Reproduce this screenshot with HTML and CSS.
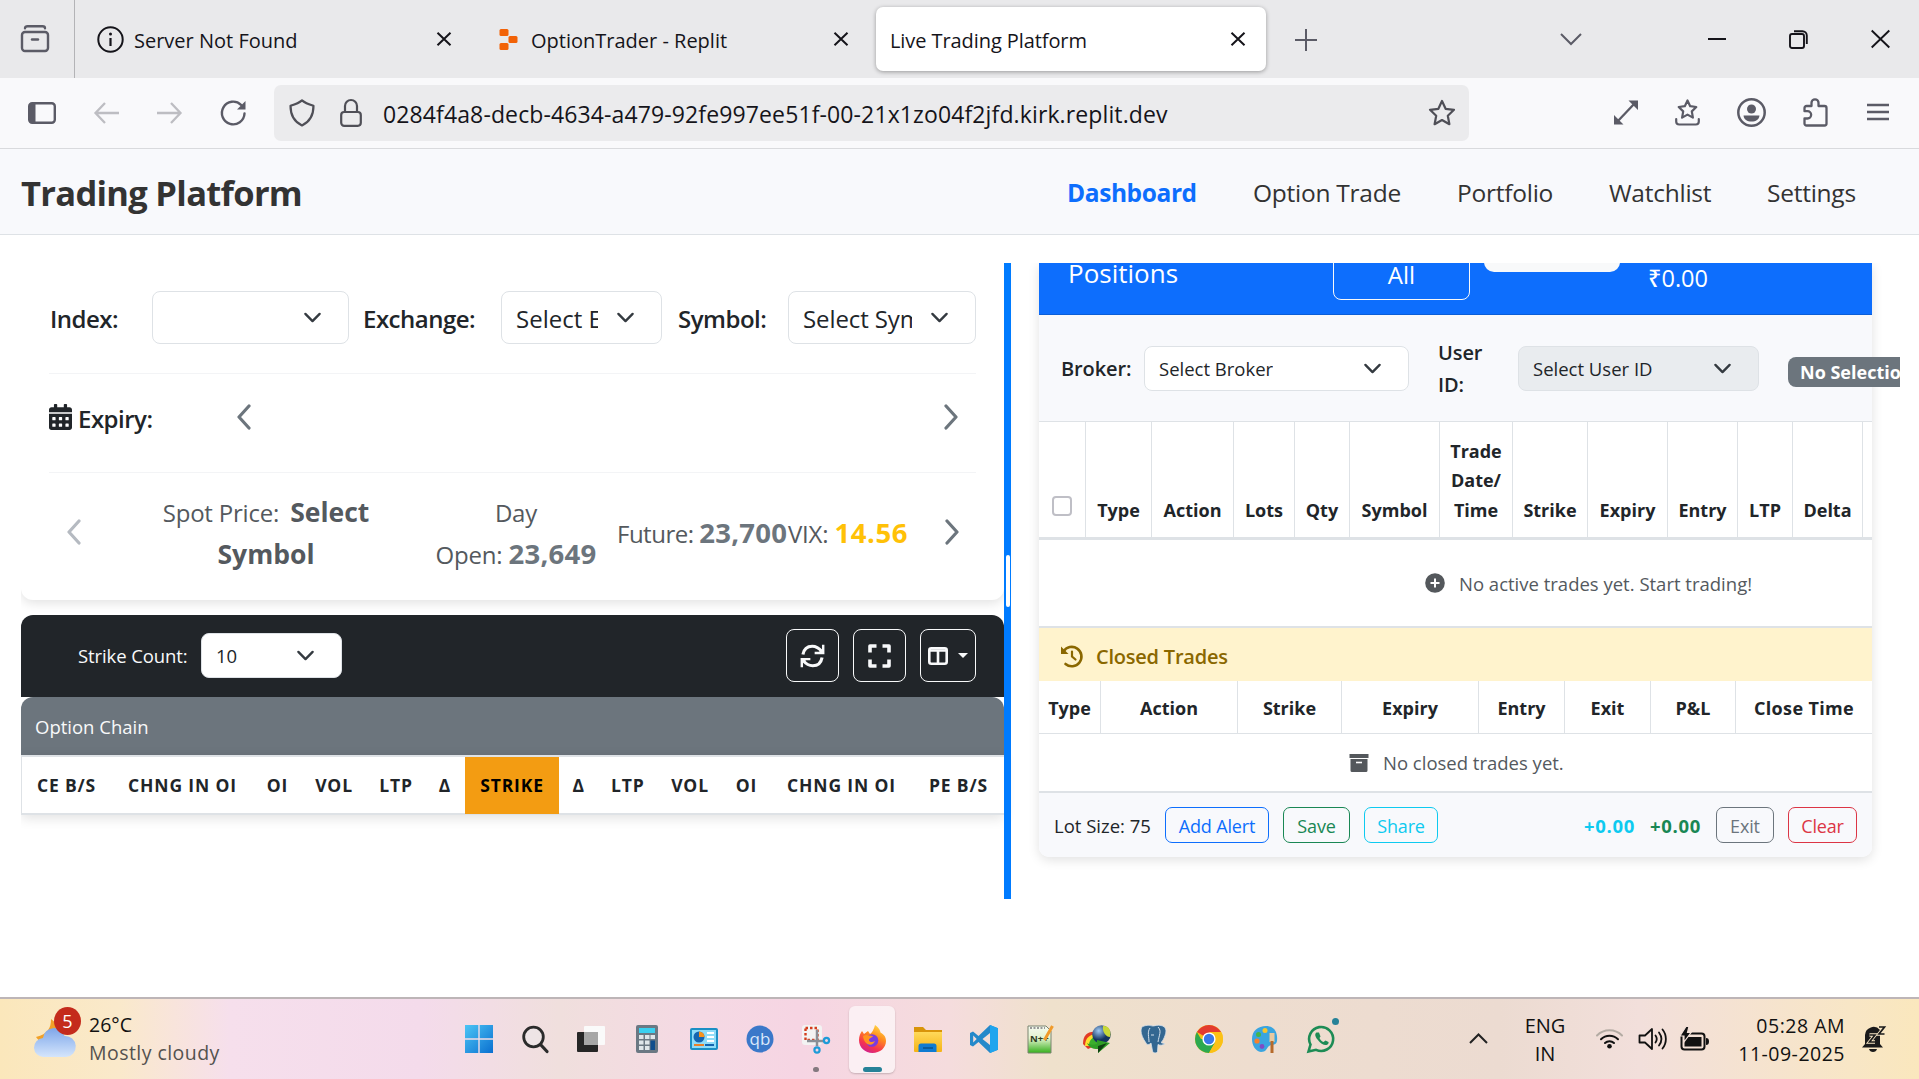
FILE: index.html
```html
<!DOCTYPE html>
<html lang="en">
<head>
<meta charset="utf-8">
<title>Live Trading Platform</title>
<link rel="stylesheet" href="styles.css">
</head>
<body>
<svg class="defs" width="0" height="0">
  <defs>
    <symbol id="chev" viewBox="0 0 16 16"><path d="m2 5 6 6 6-6" fill="none" stroke="#343a40" stroke-width="2" stroke-linecap="round" stroke-linejoin="round"/></symbol>
    <symbol id="left" viewBox="0 0 15 26"><path d="M13 2 3 13l10 11" fill="none" stroke="currentColor" stroke-width="3.2" stroke-linecap="round" stroke-linejoin="round"/></symbol>
    <symbol id="right" viewBox="0 0 15 26"><path d="m2 2 10 11L2 24" fill="none" stroke="currentColor" stroke-width="3.2" stroke-linecap="round" stroke-linejoin="round"/></symbol>
    <symbol id="x" viewBox="0 0 16 14"><path d="M1.5.8 14.5 13.2M14.5.8 1.5 13.2" fill="none" stroke="#15141a" stroke-width="2"/></symbol>
    <linearGradient id="gwin" x1="0" y1="0" x2="1" y2="1"><stop offset="0" stop-color="#4cc5f5"/><stop offset="1" stop-color="#0a6fd0"/></linearGradient>
    <linearGradient id="gcloud" x1="0" y1="0" x2="0" y2="1"><stop offset="0" stop-color="#7fa6e8"/><stop offset=".5" stop-color="#a9c6f3"/><stop offset="1" stop-color="#d5e5fb"/></linearGradient>
    <linearGradient id="gfold" x1="0" y1="0" x2="0" y2="1"><stop offset="0" stop-color="#ffd95a"/><stop offset="1" stop-color="#f5b315"/></linearGradient>
    <linearGradient id="gfox" x1=".8" y1="0" x2=".3" y2="1"><stop offset="0" stop-color="#ffe14a"/><stop offset=".4" stop-color="#ff8a1e"/><stop offset=".75" stop-color="#f5344f"/><stop offset="1" stop-color="#d0208f"/></linearGradient>
    <linearGradient id="gnote" x1="0" y1="0" x2="0" y2="1"><stop offset="0" stop-color="#f6faf0"/><stop offset=".45" stop-color="#e4f3cf"/><stop offset="1" stop-color="#35b01c"/></linearGradient>
    <radialGradient id="gball" cx=".35" cy=".3"><stop offset="0" stop-color="#9ec9f5"/><stop offset="1" stop-color="#14335f"/></radialGradient>
  </defs>
</svg>

<header class="tabs">
  <div class="view"><svg width="30" height="28" viewBox="0 0 30 28"><g fill="none" stroke="#5b5b66" stroke-width="2.4" stroke-linecap="round"><path d="M5 3.2C5 1.8 6 1.2 7.500 1.200h15C24 1.200 25 1.800 25 3.200"/><rect x="2" y="7" width="26" height="19" rx="3"/><path d="M12 14.500h6"/></g></svg></div>
  <div class="tab t1">
    <svg class="fav" width="27" height="27" viewBox="0 0 27 27"><circle cx="13.500" cy="13.500" r="12.200" fill="none" stroke="#15141a" stroke-width="2"/><path d="M13.500 12v8" stroke="#15141a" stroke-width="2.200"/><circle cx="13.500" cy="8" r="1.500" fill="#15141a"/></svg>
    <span>Server Not Found</span><svg class="cx"><use href="#x"/></svg>
  </div>
  <div class="tab t2">
    <svg class="fav" width="19" height="21" viewBox="0 0 19 21"><g fill="#f26207"><rect x=".5" y="0" width="9" height="7" rx="1.500"/><rect x="9.500" y="7" width="9" height="7" rx="1.500"/><rect x=".5" y="14" width="9" height="7" rx="1.500"/></g></svg>
    <span>OptionTrader - Replit</span><svg class="cx"><use href="#x"/></svg>
  </div>
  <div class="tab t3"><span>Live Trading Platform</span><svg class="cx"><use href="#x"/></svg></div>
  <svg class="plus" width="22" height="22" viewBox="0 0 22 22"><path d="M11 0v22M0 11h22" stroke="#5b5b66" stroke-width="2"/></svg>
  <div class="win">
    <svg width="22" height="12" viewBox="0 0 22 12"><path d="m1 1 10 10L21 1" fill="none" stroke="#5b5b66" stroke-width="2"/></svg>
    <svg width="18" height="2"><path d="M0 1h18" stroke="#15141a" stroke-width="2"/></svg>
    <svg width="19" height="19" viewBox="0 0 19 19"><g fill="none" stroke="#15141a" stroke-width="1.900"><rect x="1" y="4" width="14" height="14" rx="2"/><path d="M5 1.200h8.500a4.300 4.300 0 0 1 4.300 4.300V14"/></g></svg>
    <svg width="19" height="18" viewBox="0 0 19 18"><path d="m.7.5 17.600 17M18.300.5.7 17.500" stroke="#15141a" stroke-width="1.900"/></svg>
  </div>
</header>

<div class="toolbar">
  <div class="navbtns">
    <svg width="28" height="22" viewBox="0 0 28 22"><rect x="1.200" y="1.200" width="25.600" height="19.600" rx="3" fill="none" stroke="#5b5b66" stroke-width="2.400"/><path d="M2 2h5.500v18H2z" fill="#5b5b66"/></svg>
    <svg width="25" height="22" viewBox="0 0 25 22"><path d="M11 1 1.500 11 11 21M1.500 11H25" fill="none" stroke="#bdbdc2" stroke-width="2.300"/></svg>
    <svg width="25" height="22" viewBox="0 0 25 22"><path d="m14 1 9.500 10L14 21M23.500 11H0" fill="none" stroke="#bdbdc2" stroke-width="2.300"/></svg>
    <svg width="27" height="26" viewBox="0 0 27 26"><path d="M24.500 13.500a11.300 11.300 0 1 1-3.500-8.700" fill="none" stroke="#5b5b66" stroke-width="2.400" stroke-linecap="round"/><path d="M25.500 1v8.500H17z" fill="#5b5b66"/></svg>
  </div>
  <div class="url">
    <svg width="26" height="28" viewBox="0 0 26 28"><path d="M13 1.400C10 4 6 5.400 1.500 6.800c0 9 3 15.700 11.500 19.700 8.500-4 11.500-10.700 11.500-19.700C20 5.400 16 4 13 1.400z" fill="none" stroke="#4f4f57" stroke-width="2.200" stroke-linejoin="round"/></svg>
    <svg width="22" height="28" viewBox="0 0 22 28"><g fill="none" stroke="#4f4f57" stroke-width="2.200"><rect x="1.200" y="13" width="19.600" height="13.800" rx="3"/><path d="M5 13V7a6 6 0 0 1 12 0v6"/></g></svg>
    <span>0284f4a8-decb-4634-a479-92fe997ee51f-00-21x1zo04f2jfd.kirk.replit.dev</span>
    <svg class="star" width="28" height="28" viewBox="0 0 28 28"><path d="m14 2 3.600 7.800 8.400 1-6.200 5.900 1.600 8.500L14 21l-7.400 4.200 1.600-8.500L2 10.800l8.400-1z" fill="none" stroke="#4f4f57" stroke-width="2.200" stroke-linejoin="round"/></svg>
  </div>
  <div class="ext">
    <svg width="24" height="25" viewBox="0 0 24 25"><path d="M3 22 21 3" stroke="#5b5b66" stroke-width="2.300"/><path d="M14.500.5H24V10zM0 15v9.500h9.500z" fill="#5b5b66"/></svg>
    <svg width="25" height="27" viewBox="0 0 25 27"><g fill="none" stroke="#5b5b66" stroke-width="2.200" stroke-linejoin="round" stroke-linecap="round"><path d="m12.500 1.500 2.700 5.700 6.100.8-4.500 4.400 1.100 6.200-5.400-3-5.400 3 1.100-6.200L3.700 8l6.100-.8z"/><path d="M1.200 20v2.500a3 3 0 0 0 3 3h16.600a3 3 0 0 0 3-3V20"/></g></svg>
    <svg width="29" height="29" viewBox="0 0 29 29"><circle cx="14.500" cy="14.500" r="13.200" fill="none" stroke="#5b5b66" stroke-width="2.500"/><circle cx="14.500" cy="11" r="4.500" fill="#5b5b66"/><path d="M6.500 17.500h16c-.5 4-3.500 6-8 6s-7.500-2-8-6z" fill="#5b5b66"/></svg>
    <svg width="25" height="29" viewBox="0 0 25 29"><path d="M1.500 26V20.500h3a3.500 3.500 0 0 0 0-7.300h-3V10a2 2 0 0 1 2-2h5V4.800a3.500 3.500 0 0 1 7 0V8h6a2 2 0 0 1 2 2v15.500a2 2 0 0 1-2 2h-18a2 2 0 0 1-2-2" fill="none" stroke="#5b5b66" stroke-width="2.300" stroke-linejoin="round"/></svg>
    <svg width="22" height="18" viewBox="0 0 22 18"><path d="M0 2h22M0 9h22M0 16h22" stroke="#5b5b66" stroke-width="2.300"/></svg>
  </div>
</div>

<nav class="site">
  <div class="brand">Trading Platform</div>
  <div class="links"><b>Dashboard</b><span>Option Trade</span><span>Portfolio</span><span>Watchlist</span><span>Settings</span></div>
</nav>

<main>
  <section class="leftcol">
    <div class="panel">
      <div class="row sel">
        <label>Index:</label><div class="select"><svg><use href="#chev"/></svg></div>
        <label>Exchange:</label><div class="select"><span>Select Exchange</span><svg><use href="#chev"/></svg></div>
        <label>Symbol:</label><div class="select"><span>Select Symbol</span><svg><use href="#chev"/></svg></div>
      </div>
      <div class="row expiry">
        <svg class="cal" width="23" height="26" viewBox="0 0 448 512" preserveAspectRatio="none"><path fill="#212529" d="M0 464c0 26 22 48 48 48h352c26 0 48-22 48-48V192H0v272zm320-196c0-7 5-12 12-12h40c7 0 12 5 12 12v40c0 7-5 12-12 12h-40c-7 0-12-5-12-12v-40zm0 128c0-7 5-12 12-12h40c7 0 12 5 12 12v40c0 7-5 12-12 12h-40c-7 0-12-5-12-12v-40zM192 268c0-7 5-12 12-12h40c7 0 12 5 12 12v40c0 7-5 12-12 12h-40c-7 0-12-5-12-12v-40zm0 128c0-7 5-12 12-12h40c7 0 12 5 12 12v40c0 7-5 12-12 12h-40c-7 0-12-5-12-12v-40zM64 268c0-7 5-12 12-12h40c7 0 12 5 12 12v40c0 7-5 12-12 12H76c-7 0-12-5-12-12v-40zm0 128c0-7 5-12 12-12h40c7 0 12 5 12 12v40c0 7-5 12-12 12H76c-7 0-12-5-12-12v-40zM400 64h-48V16c0-9-7-16-16-16h-32c-9 0-16 7-16 16v48H160V16c0-9-7-16-16-16h-32c-9 0-16 7-16 16v48H48C22 64 0 86 0 112v48h448v-48c0-26-22-48-48-48z"/></svg>
        <label>Expiry:</label>
        <svg class="arrow"><use href="#left"/></svg><svg class="arrow"><use href="#right"/></svg>
      </div>
      <div class="row spot">
        <svg class="arrow dim"><use href="#left"/></svg>
        <div class="q q1">Spot Price: <b>Select<br>Symbol</b></div>
        <div class="q q2">Day<br>Open: <b>23,649</b></div>
        <div class="q q3">Future: <b>23,700</b></div>
        <div class="q q4">VIX: <b>14.56</b></div>
        <svg class="arrow"><use href="#right"/></svg>
      </div>
    </div>
    <div class="strikebar">
      <span>Strike Count:</span>
      <div class="select"><span>10</span><svg><use href="#chev"/></svg></div>
      <div class="btns">
        <i><svg width="25" height="24" viewBox="0 0 512 512" preserveAspectRatio="none"><path fill="none" stroke="#f8f9fa" stroke-width="64" d="M60 225C80 110 150 48 250 48c80 0 140 40 195 110M452 287c-20 115-90 177-190 177-80 0-140-40-195-110"/><path fill="#f8f9fa" d="M500 16v200H300v-50h90l60-60V16zM12 496V296h200v50h-90l-60 60v90z"/></svg></i>
        <i><svg width="23" height="24" viewBox="0 0 23 24"><path d="M2 8.500V2h6.500M14.500 2H21v6.500M21 15.500V22h-6.500M8.500 22H2v-6.500" fill="none" stroke="#f8f9fa" stroke-width="3.600" stroke-linejoin="round"/></svg></i>
        <i class="wide"><svg width="20" height="18" viewBox="0 0 20 18"><rect x="1.300" y="1.300" width="17.400" height="15.400" rx="2" fill="none" stroke="#f8f9fa" stroke-width="2.600"/><path d="M1 3.500h18M10 3v14" stroke="#f8f9fa" stroke-width="2.600"/></svg><em></em></i>
      </div>
    </div>
    <div class="chaintitle">Option Chain</div>
    <div class="chain"><span>CE B/S</span><span>CHNG IN OI</span><span>OI</span><span>VOL</span><span>LTP</span><span>Δ</span><span class="strike">STRIKE</span><span>Δ</span><span>LTP</span><span>VOL</span><span>OI</span><span>CHNG IN OI</span><span>PE B/S</span></div>
  </section>
  <div class="split"><i></i></div>
  <section class="rightcol">
    <div class="card">
      <div class="pos"><span class="pt">Positions</span><span class="all">All</span><span class="act"></span><span class="pnl">₹0.00</span></div>
      <div class="filter">
        <label>Broker:</label><div class="select"><span>Select Broker</span><svg><use href="#chev"/></svg></div>
        <label class="uid">User<br>ID:</label><div class="select off"><span>Select User ID</span><svg><use href="#chev"/></svg></div>
        <b class="badge">No Selection</b>
      </div>
      <div class="thead t-open"><span><i class="check"></i></span><span>Type</span><span>Action</span><span>Lots</span><span>Qty</span><span>Symbol</span><span>Trade<br>Date/<br>Time</span><span>Strike</span><span>Expiry</span><span>Entry</span><span>LTP</span><span>Delta</span><span></span></div>
      <div class="empty e1"><svg width="20" height="20" viewBox="0 0 20 20"><circle cx="10" cy="10" r="9.800" fill="#54585c"/><path d="M10 5.500v9M5.500 10h9" stroke="#fff" stroke-width="2"/></svg><span>No active trades yet. Start trading!</span></div>
      <div class="closed"><svg width="23" height="23" viewBox="0 0 23 23"><path d="M3.500 6.500A9.700 9.700 0 1 1 5.500 19" fill="none" stroke="#8a6700" stroke-width="2.600" stroke-linecap="round"/><path d="M1 1.500V9h7.500z" fill="#8a6700"/><path d="M12 6.500v5l3.500 3" fill="none" stroke="#8a6700" stroke-width="2.200" stroke-linecap="round"/></svg><span>Closed Trades</span></div>
      <div class="thead t-closed"><span>Type</span><span>Action</span><span>Strike</span><span>Expiry</span><span>Entry</span><span>Exit</span><span>P&amp;L</span><span>Close Time</span></div>
      <div class="empty e2"><svg width="20" height="18" viewBox="0 0 20 18"><path d="M.5 0h19v4H.5zM1.500 5h17v11.500a1.500 1.500 0 0 1-1.500 1.500H3a1.500 1.500 0 0 1-1.500-1.500z" fill="#54585c"/><path d="M7 8.500h6" stroke="#fff" stroke-width="1.600"/></svg><span>No closed trades yet.</span></div>
      <div class="foot">
        <span class="lot">Lot Size: 75</span><a class="b1">Add Alert</a><a class="b2">Save</a><a class="b3">Share</a>
        <b class="v1">+0.00</b><b class="v2">+0.00</b><a class="b4">Exit</a><a class="b5">Clear</a>
      </div>
    </div>
  </section>
</main>

<footer class="taskbar">
  <div class="weather">
    <svg width="50" height="50" viewBox="0 0 50 50"><path d="M17 8c0 9-3 15-15 18 5 7 12 8 18 6 7-3 10-9 9-14z" fill="#f2a128"/><path d="M10 46a9.500 9.500 0 0 1-1-19 11 11 0 0 1 21.500-2A10.500 10.500 0 0 1 32 46z" fill="url(#gcloud)"/></svg>
    <b>5</b>
    <div class="wt">26°C<br><span>Mostly cloudy</span></div>
  </div>
  <div class="apps">
    <svg viewBox="0 0 28 28"><g fill="url(#gwin)"><path d="M0 0h13.300v13.300H0zM14.700 0H28v13.300H14.700zM0 14.700h13.300V28H0zM14.700 14.700H28V28H14.700z"/></g></svg>
    <svg viewBox="0 0 28 28"><circle cx="12.500" cy="12" r="9.800" fill="#eceaeb" fill-opacity=".5" stroke="#2b2b2b" stroke-width="2.800"/><path d="m19.500 19.500 6.500 7" stroke="#2b2b2b" stroke-width="3.200" stroke-linecap="round"/></svg>
    <svg viewBox="0 0 28 28"><rect x="0" y="7" width="21" height="20" rx="1" fill="#262626"/><rect x="7" y="1" width="21" height="19" rx="1" fill="#fafafa"/><path d="M7 7h14v13H7z" fill="#a6a6a6"/></svg>
    <svg viewBox="0 0 28 28"><rect x="3" y="0" width="22" height="28" rx="2" fill="#6b7883"/><rect x="6" y="3" width="16" height="5" fill="#3ad0f0"/><g fill="#dfe6ea"><path d="M6 10h4.500v4H6zM12 10h4.500v4H12zM17.500 10H22v4h-4.500zM6 15.500h4.500v4H6zM12 15.500h4.500v4H12zM6 21h4.500v4H6zM12 21h4.500v4H12z"/></g><path d="M17.500 15.500H22V25h-4.500z" fill="#124e8c"/></svg>
    <svg viewBox="0 0 28 28"><rect x="0" y="3" width="28" height="22" rx="2" fill="#1b8fc4"/><rect x="2" y="5" width="24" height="18" fill="#8fdcf8"/><circle cx="9" cy="12" r="5.500" fill="#1565b0"/><path d="M9 12V6.500a5.500 5.500 0 0 1 5.500 5.500z" fill="#f8931d"/><path d="M17 8h7M17 12h7M17 16h7" stroke="#fff" stroke-width="2"/><path d="M4 20h10" stroke="#e8812a" stroke-width="2"/><path d="M15 20h9" stroke="#1565b0" stroke-width="2"/></svg>
    <svg viewBox="0 0 28 28"><circle cx="14" cy="14" r="13.500" fill="#3b78c9"/><text x="14" y="20" text-anchor="middle" font-size="17" fill="#dbe9fb">qb</text></svg>
    <div class="snip"><svg viewBox="0 0 28 28"><rect x="0" y="0" width="20" height="20" rx="3" fill="#f3f3f3"/><rect x="3.500" y="3" width="12" height="12" fill="none" stroke="#d33c1c" stroke-width="2.400" stroke-dasharray="2.500 2"/><path d="M15 5v16M5 16h18" stroke="#8a8f96" stroke-width="2.500"/><g fill="none" stroke="#1d9bd8" stroke-width="2.200"><circle cx="24.500" cy="15.500" r="2.600"/><circle cx="15" cy="25" r="2.600"/></g></svg></div>
    <div class="fox"><svg viewBox="0 0 28 28"><path d="M17 0c4 3 5 5 5.500 7.500C27 10 28 13 28 16c0 7-6 12-13.500 12S1 22.500 1 15c0-4 1.500-7 3-9l2 3 4-3 2 3c2-1 4-5 5-9z" fill="url(#gfox)"/><circle cx="14" cy="15.500" r="6.300" fill="#7a3be0"/><path d="M5 11c4-2 6 0 10 0-1 2-4 2-4 4s3 3 6 1c-2 6-11 5-12-5z" fill="#ff9420"/></svg></div>
    <svg viewBox="0 0 28 28"><path d="M0 2h9l3 3h16v8H0z" fill="#d8940a"/><path d="M0 7h28v19a1 1 0 0 1-1 1H1a1 1 0 0 1-1-1z" fill="url(#gfold)"/><path d="M4.500 27v-6a2.500 2.500 0 0 1 2.500-2.500h13a2.500 2.500 0 0 1 2.500 2.500v6z" fill="#0f7bd2"/><path d="M9 23h10" stroke="#0a5590" stroke-width="1.600"/></svg>
    <svg viewBox="0 0 28 28"><path d="m20 0 8 3.200v21.600L20 28 8.500 17 3 21.500 0 20V8l3-1.500L8.500 11zM20 8l-7.500 6L20 20zM3.200 10.500v7L6.700 14z" fill="#2489ca" fill-rule="evenodd"/><path d="m20 0 8 3.200v21.600L20 28z" fill="#1fa5ee"/></svg>
    <svg viewBox="0 0 28 28"><path d="M2 1h18l5 5v22H2z" fill="url(#gnote)" stroke="#7b8471"/><path d="M4 3h15" stroke="#999" stroke-width="2" stroke-dasharray="2 1.500"/><text x="4" y="17" font-size="9.500" font-weight="bold" fill="#2f3c1f">N++</text><path d="m26.500 1-8 14" stroke="#f09a2a" stroke-width="3"/></svg>
    <svg viewBox="0 0 28 28"><path d="M0 19C0 10 5 6 13 7l3 12-11 5z" fill="#e23b26"/><path d="M2 21C2 12 8 9 14 9v12z" fill="#ffe02e"/><path d="M6 20c0-5 4-9 10-9v9z" fill="#3aae2c"/><circle cx="18.500" cy="9.500" r="9.300" fill="url(#gball)"/><path d="M20 1c6-1 8.500 5 7 11-4 0-8-5-7-11z" fill="#c7d838"/><path d="M4 18c3 2 6 2 10 1v-4l13 3-12 10v-4c-6 0-9-2-11-6z" fill="#2f9e26"/><path d="m15 21 9-3-9 10z" fill="#0f3f12"/></svg>
    <svg viewBox="0 0 28 28"><path d="M5 1c5-1.500 7 0 9 0s4-1.500 8-.5c5 1 6 5 4 10-1 3-2.500 6-4 7 2 1 3 1 4 1-2 2-5 2-7 1l-.5 7c-.5 2-4.500 2-5-.5L12 18c-2 2-4 2-5 0C4 14 2 9 2 6c0-3 1-4.500 3-5z" fill="#336791" stroke="#d5e1ec" stroke-width=".8"/><path d="M11 3c-3 4-1 9-1 14M19 2c4 4 1 8 0 15M12 10h3" stroke="#d5e1ec" fill="none"/></svg>
    <svg viewBox="0 0 28 28"><circle cx="14" cy="14" r="14" fill="#fbc116"/><path d="M14 14 1.900 7A14 14 0 0 1 26.100 7z" fill="#e33b2e"/><path d="M1.900 7A14 14 0 0 0 14 28l6.100-10.500L14 14H6z" fill="#2da94f"/><path d="M14 7h12.100A14 14 0 0 1 14 28l6-10.500z" fill="#fbc116"/><circle cx="14" cy="14" r="6.600" fill="#fff"/><circle cx="14" cy="14" r="5.200" fill="#3a78e7"/></svg>
    <svg viewBox="0 0 28 28"><path d="M15 1c8 0 12 6 11 15-1 5-5 3-8 5-3 3-3 6-8 6C4 26 1 20 1 14 1 6 7 1 15 1z" fill="#3aa5e0"/><circle cx="6" cy="16" r="2.600" fill="#f7802c"/><circle cx="7.500" cy="9.500" r="2.500" fill="#46b549"/><circle cx="14" cy="5.500" r="2.500" fill="#f7c52c"/><circle cx="11" cy="21.500" r="2.400" fill="#7f4cc5"/><path d="M21 8v9" stroke="#e8c9a0" stroke-width="5"/><path d="M21 16v12" stroke="#b66a2b" stroke-width="3"/></svg>
    <div class="wa"><svg viewBox="0 0 28 28"><path d="m1.500 26.500 2-7A12 12 0 1 1 9 24.800z" fill="none" stroke="#1d8c55" stroke-width="2.600"/><path d="M9.500 7.500c-2 1.500-1.500 4 1 7 3 4 6.500 6 9 5.500 1.500-.5 2.500-2 2-3l-3-1.500-2 1.500c-1.500-.5-3.500-2.500-4-4l1-1.500-1.500-4z" fill="#1d8c55"/></svg></div>
  </div>
  <div class="tray">
    <svg class="up" width="19" height="11" viewBox="0 0 19 11"><path d="m1 10 8.500-8.500L18 10" fill="none" stroke="#222" stroke-width="2"/></svg>
    <div class="lang">ENG<br>IN</div>
    <svg width="27" height="21" viewBox="0 0 27 21"><g fill="none" stroke-width="2" stroke-linecap="round"><path d="M1 7.500a17.500 17.500 0 0 1 25 0" stroke="#b3aba3"/><path d="M5 11.200a12 12 0 0 1 17 0M9 15a6.500 6.500 0 0 1 9 0" stroke="#111"/></g><circle cx="13.500" cy="18.300" r="2.300" fill="#111"/></svg>
    <svg width="29" height="24" viewBox="0 0 29 24"><path d="M1.500 8.500H7l7-6.500v20l-7-6.500H1.500z" fill="none" stroke="#111" stroke-width="1.800" stroke-linejoin="round"/><path d="M17.500 8.500a6 6 0 0 1 0 7M21 5.500c3 4 3 9 0 13M24.500 2.500c4.500 5.500 4.500 13.500 0 19" fill="none" stroke="#111" stroke-width="1.800" stroke-linecap="round"/></svg>
    <svg width="29" height="24" viewBox="0 0 29 24"><rect x="1.500" y="6.500" width="23" height="16" rx="3" fill="none" stroke="#111" stroke-width="2"/><rect x="4.500" y="10" width="17" height="9.500" fill="#111"/><path d="M26 11v7c2 0 3-1 3-3.500S28 11 26 11z" fill="#111"/><path d="M6-.5 0 9h4v6l7-9.500H7.500L9-.5z" fill="#111" stroke="#f1ded6" stroke-width="1.200"/></svg>
    <div class="clock">05:28 AM<br>11-09-2025</div>
    <svg width="24" height="27" viewBox="0 0 24 27"><path d="M3 19V10a8.500 8.500 0 0 1 15-5v14l3 3.500H0z" fill="#1a1a1a"/><path d="M7 24h8c-.5 2-2 3-4 3s-3.500-1-4-3z" fill="#1a1a1a"/><path d="M7.500 10h5.500l-5.500 7H13M17 2h5.500L17 9h5.500" fill="none" stroke="#f9e8c6" stroke-width="3.500"/><path d="M7.500 10h5.500l-5.500 7H13M17 2h5.500L17 9h5.500" fill="none" stroke="#1a1a1a" stroke-width="1.700"/></svg>
  </div>
</footer>
</body>
</html>
```

FILE: styles.css
```css
* { box-sizing: border-box; }
html, body { margin: 0; }
body {
  width: 1919px; height: 1079px; overflow: hidden; background: #fff; color: #212529;
  font-family: "Open Sans", "Noto Sans", sans-serif; font-stretch: 93%; font-size: 24px;
  display: flex; flex-direction: column; white-space: nowrap;
}
svg { display: block; flex: none; overflow: visible; }
svg.defs { position: absolute; }
i, em { font-style: normal; }

/* browser tab strip */
.tabs { height: 78px; flex: none; background: #e9e9eb; display: flex; align-items: center; font-size: 20px; color: #15141a; }
.view { width: 75px; height: 78px; padding: 25px 0 0 20px; border-right: 1px solid #b3b3b6; }
.tab { height: 64px; margin: 0 0 0 7px; display: flex; align-items: center; border-radius: 7px; }
.tab span { flex: 1; padding-top: 2px; }
.cx { width: 16px; height: 14px; }
.t1 { width: 390px; padding: 0 20px 0 15px; }
.t1 .fav { margin-right: 10px; }
.t2 { width: 390px; padding: 0 20px; }
.t2 .fav { margin-right: 13px; }
.t3 { width: 390px; padding: 0 20px 0 14px; background: #fff; box-shadow: 0 1px 4px rgba(0,0,0,.35); }
.t3 span { letter-spacing: -.08px; }
.plus { margin: 2px 0 0 29px; }
.win { flex: 1; display: flex; align-items: center; padding-left: 243px; }
.win svg:nth-child(2) { margin-left: 126px; }
.win svg:nth-child(3) { margin-left: 63px; }
.win svg:nth-child(4) { margin-left: 63px; }

/* browser toolbar */
.toolbar { height: 71px; flex: none; background: #f9f9fb; border-bottom: 1px solid #d9dadd; display: flex; align-items: center; }
.navbtns { width: 274px; padding-left: 28px; display: flex; align-items: center; gap: 38px; }
.url { width: 1195px; height: 56px; border-radius: 7px; background: #ebebed; display: flex; align-items: center; padding: 0 13px 0 15px; color: #15141a; font-size: 23px; letter-spacing: .12px; }
.url svg:nth-child(2) { margin: 0 21px 0 25px; }
.url span { flex: 1; padding-top: 2px; }
.ext { display: flex; align-items: center; padding: 0 0 2px 145px; gap: 37px; }
.ext svg:last-child { margin-left: 2px; }

/* site navigation */
.site { height: 86px; flex: none; background: #f8f9fc; border-bottom: 1px solid #dee2e6; display: flex; align-items: center; padding: 2px 0 0 21px; }
.brand { width: 1046px; font-weight: 700; font-size: 34.500px; color: #333; letter-spacing: -.7px; }
.links { display: grid; grid-template-columns: 186px 204px 152px 158px 100px; color: #333; font-size: 24.500px; letter-spacing: -.25px; }
.links b { color: #0d6efd; letter-spacing: -.4px; }

/* split workspace */
main { flex: none; margin: 28px 19px 98px 21px; height: 636px; display: flex; overflow: hidden; }
.leftcol { width: 983px; flex: none; }
.panel { height: 337px; margin-bottom: 15px; padding: 0 28px; border-radius: 0 0 12px 12px; background: #fff; box-shadow: 0 3px 12px rgba(0,0,0,.12); }
.row { display: flex; align-items: center; }
label { font-weight: 600; letter-spacing: -.5px; }
.select { height: 53px; border: 1px solid #dee2e6; border-radius: 8px; background: #fff; display: flex; align-items: center; padding-left: 14px; }
.select span { overflow: hidden; }
.select svg { width: 19px; height: 19px; margin-left: auto; margin-right: 26px; }
.sel { height: 111px; padding-bottom: 1px; border-bottom: 1px solid #f3f4f6; display: grid; grid-template-columns: 103px 197px 14px 138px 161px 15px 111px 188px; }
.sel label { padding: 2px 0 0 1px; }
.sel label:nth-of-type(2) { grid-column: 4; padding-left: 0; }
.sel label:nth-of-type(3) { grid-column: 7; }
.sel .select span { width: 82px; padding-top: 2px; }
.sel .select:last-child span { width: 109px; letter-spacing: -.1px; }
.expiry { height: 99px; padding-bottom: 12px; border-bottom: 1px solid #f3f4f6; }
.cal { margin-right: 6px; }
.expiry label { width: 158px; padding-top: 2px; }
.arrow { width: 15px; height: 26px; color: #6c757d; }
.expiry .arrow + .arrow { margin-left: 693px; }
.arrow.dim { color: #b5bac1; }
.spot { height: 120px; line-height: 42px; color: #54595e; padding-left: 17px; }
.spot .arrow { margin-bottom: 3px; }
.spot .arrow:last-child { margin-left: 1px; }
.q { text-align: center; letter-spacing: -.2px; padding-top: 1px; }
.q b { font-size: 27.500px; line-height: 1; letter-spacing: .25px; }
.q1 { width: 214px; margin-left: 78px; }
.q1 b { color: #54595e; font-size: 26.500px; margin-left: 5px; letter-spacing: 0; }
.q2 { width: 162px; margin-left: 62px; }
.q2 b, .q3 b { color: #6c757d; }
.q3 { width: 171px; margin-left: 20px; text-align: left; letter-spacing: -.5px; }
.q4 { width: 156px; text-align: left; }
.q4 b { color: #ffc107; letter-spacing: .6px; }
.strikebar { height: 82px; background: #212529; border-radius: 12px 12px 0 0; display: flex; align-items: center; padding: 0 28px 1px 57px; color: #f8f9fa; font-size: 18.500px; }
.strikebar > span { width: 123px; letter-spacing: -.1px; }
.strikebar .select { width: 141px; height: 45px; color: #212529; }
.btns { margin-left: auto; display: flex; gap: 14px; }
.btns i { width: 53px; height: 53px; border: 1px solid #f8f9fa; border-radius: 8px; display: flex; align-items: center; justify-content: center; }
.btns i.wide { width: 56px; gap: 10px; }
.btns em { border: 5px solid transparent; border-top-color: #f8f9fa; border-bottom: 0; }
.chaintitle { height: 58px; background: #6c757d; border-radius: 12px 12px 0 0; color: #f8f9fa; font-size: 18.500px; line-height: 60px; padding-left: 14px; }
.chain { height: 60px; border: solid #dee2e6; border-width: 2px 0 2px 1px; box-shadow: 0 3px 12px rgba(0,0,0,.12); display: grid; grid-template-columns: 89px 143px 47px 66px 58px 40px 94px 39.500px 58.500px 66px 47px 143px 91px; font-size: 17.500px; font-weight: 700; letter-spacing: .85px; line-height: 57px; text-align: center; }
.chain .strike { background: #f39c12; color: #000; }
.split { width: 7px; flex: none; background: #007bff; padding: 292px 0 0 2px; }
.split i { display: block; width: 4px; height: 52px; border-radius: 2px; background: #fff; }

/* positions card */
.rightcol { flex: 1; min-width: 0; overflow: hidden; padding-left: 28px; border-radius: 0 0 12px 12px; }
.card { width: 833px; height: 594px; border-radius: 0 0 10px 10px; box-shadow: 0 3px 12px rgba(0,0,0,.12); font-size: 18.500px; }
.pos { height: 52px; background: #0d6efd; border-bottom: 1px solid #0b5ed7; color: #fff; overflow: hidden; display: flex; align-items: flex-start; }
.pt { width: 294px; padding-left: 29px; font-size: 26px; line-height: 36px; margin-top: -8px; }
.all { width: 137px; height: 53px; margin: -16px 14px 0 0; border: 1px solid #f8f9fa; border-radius: 8px; font-size: 24px; line-height: 54px; text-align: center; }
.act { width: 136px; height: 53px; margin-top: -44px; background: #f8f9fa; border-radius: 10px; }
.pnl { margin-left: 28px; font-size: 23.500px; font-weight: 500; line-height: 30px; }
.filter { height: 107px; background: #f8f9fc; border-bottom: 1px solid #dee2e6; display: flex; align-items: center; padding-left: 22px; }
.filter label { width: 83px; flex: none; font-size: 20px; letter-spacing: -.1px; padding-top: 1px; }
.filter label.uid { width: 80px; line-height: 32px; margin-left: 29px; padding-top: 2px; }
.filter .select { height: 45px; width: 265px; flex: none; }
.filter .off { width: 241px; background: #e9ecef; }
.badge { flex: none; width: 130px; height: 30px; margin: 8px 0 0 29px; padding-left: 12px; border-radius: 8px; background: #6c757d; color: #fff; font-size: 18px; line-height: 30px; }
.thead { display: grid; overflow: hidden; font-weight: 700; font-size: 18px; text-align: center; align-items: stretch; }
.thead span { border-right: 1px solid #dee2e6; display: flex; align-items: flex-end; justify-content: center; }
.thead span:last-child { border-right: 0; }
.t-open { height: 118px; border-bottom: 3px solid #dee2e6; grid-template-columns: 47px 66px 82px 61px 55px 90px 73px 75px 80px 70px 55px 70px 9px; line-height: 29.500px; }
.t-open span { padding-bottom: 12px; }
.check { width: 20px; height: 20px; margin-bottom: 9px; border: 2px solid #bfbfc6; border-radius: 4px; background: #fff; }
.empty { display: flex; align-items: center; gap: 14px; color: #54595e; background: #fff; }
.e1 { height: 88px; border-bottom: 2px solid #dee2e6; padding-left: 386px; }
.closed { height: 53px; background: #fff3cd; color: #8a6700; display: flex; align-items: center; gap: 13px; padding: 3px 0 0 21px; font-size: 20px; font-weight: 600; letter-spacing: -.22px; }
.t-closed { height: 53px; border-bottom: 1px solid #dee2e6; grid-template-columns: 62px 137px 104px 137px 86px 86px 85px 136px; }
.t-closed span { align-items: center; padding-top: 2px; }
.t-closed span:last-child { letter-spacing: .35px; }
.e2 { height: 59px; border-bottom: 2px solid #dee2e6; padding-left: 310px; }
.foot { height: 64px; background: #f8f9fc; display: flex; align-items: center; padding-left: 15px; border-radius: 0 0 10px 10px; }
.lot { width: 111px; flex: none; }
.foot a { height: 36px; flex: none; border: 1px solid; border-radius: 7px; line-height: 36px; text-align: center; margin-right: 14px; font-size: 18px; letter-spacing: -.15px; }
.b1 { width: 104px; color: #0d6efd; }
.b2 { width: 67px; color: #198754; }
.b3 { width: 74px; color: #0dcaf0; }
.v1, .v2 { width: 66px; flex: none; padding-top: 1px; letter-spacing: .7px; }
.v1 { margin-left: 132px; color: #0dcaf0; }
.v2 { color: #198754; }
.b4 { width: 58px; color: #6c757d; }
.b5 { width: 69px; color: #dc3545; }

/* desktop taskbar */
.taskbar { height: 82px; flex: none; border-top: 2px solid #bdb5b7; display: flex; align-items: flex-start; font-size: 19.500px; line-height: 28px; color: #111;
  background: linear-gradient(90deg, #fbe7bb 0, #fae9cb 120px, #f6dfec 230px, #f4dbeb 420px, #f0dfdd 560px, #f5d9e4 700px, #f6d5e3 800px, #f5dcdd 950px, #efe1cc 1050px, #eeddcf 1250px, #ecdbd1 1500px, #f2dfdb 1640px, #f8e6c6 1850px, #fae7bd 1919px); }
.weather { width: 465px; position: relative; display: flex; padding: 12px 0 0 34px; }
.weather b { position: absolute; left: 54px; top: 8px; width: 27px; height: 28px; border-radius: 50%; background: #c42b1c; color: #fff; text-align: center; font-weight: 400; font-size: 18px; }
.wt { margin-left: 5px; }
.wt span { color: #54524f; letter-spacing: .45px; }
.apps { width: 1004px; display: flex; gap: 28.150px; padding-top: 26px; }
.apps svg { width: 28px; height: 28px; }
.snip, .wa { position: relative; }
.snip::after { content: ""; position: absolute; left: 11px; top: 42px; width: 6px; height: 5px; border-radius: 3px; background: #84797f; }
.fox { width: 46px; height: 67px; margin: -19px -9px 0; padding: 19px 9px 0; border-radius: 6px; background: rgba(255,255,255,.6); box-shadow: 0 1px 2px rgba(0,0,0,.2); position: relative; }
.fox::after { content: ""; position: absolute; left: 14px; bottom: 1px; width: 19px; height: 5px; border-radius: 3px; background: #268298; }
.wa::after { content: ""; position: absolute; left: 25px; top: -7px; width: 7px; height: 7px; border-radius: 50%; background: #268298; }
.tray { display: flex; align-items: center; padding-top: 12px; }
.tray > svg { margin-bottom: 2px; }
.lang { width: 60px; margin: 1px 21px 0 27px; text-align: center; font-size: 20px; }
.tray > svg:nth-child(4) { margin-left: 15px; }
.tray > svg:nth-child(5) { margin-left: 13px; }
.clock { width: 136px; text-align: right; margin-right: 17px; letter-spacing: .5px; }
```
